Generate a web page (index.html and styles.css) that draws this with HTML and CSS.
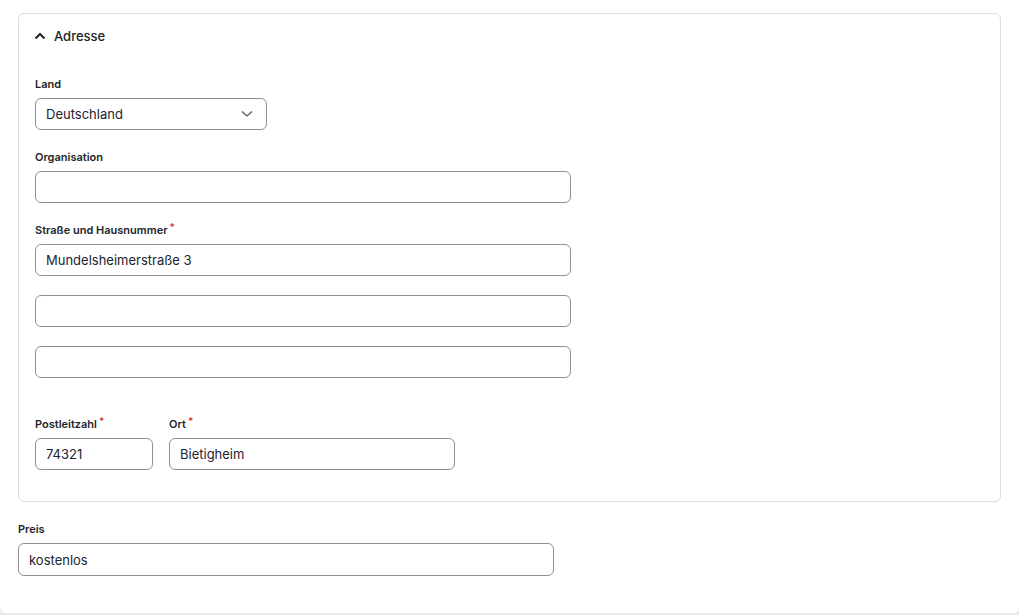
FILE: index.html
```html
<!DOCTYPE html>
<html lang="de">
<head>
    <meta charset="utf-8">
    <meta name="viewport" content="width=device-width, initial-scale=1.0">
    <title>Adresse</title>
    <link rel="stylesheet" href="styles.css">
</head>
<body>
    <div class="page">
        <details class="fieldset" open>
            <summary class="fieldset-title">
                <svg class="chevron" width="12" height="8" viewBox="0 0 12 8">
                    <polyline points="1.5,6.5 6,2 10.5,6.5" fill="none" stroke="#232429" stroke-width="2"/>
                </svg>
                Adresse
            </summary>
            <div class="fieldset-body">
                <div class="field">
                    <label class="label">Land</label>
                    <div class="select">
                        <span>Deutschland</span>
                        <svg width="12" height="8" viewBox="0 0 12 8">
                            <polyline points="1,1.5 6,6 11,1.5" fill="none" stroke="#545560" stroke-width="1.3"/>
                        </svg>
                    </div>
                </div>
                <div class="field">
                    <label class="label">Organisation</label>
                    <input class="input wide" type="text" value="">
                </div>
                <div class="field">
                    <label class="label required">Straße und Hausnummer</label>
                    <input class="input wide" type="text" value="Mundelsheimerstraße 3">
                </div>
                <div class="field">
                    <input class="input wide" type="text" value="">
                </div>
                <div class="field">
                    <input class="input wide" type="text" value="">
                </div>
                <div class="field-row">
                    <div class="field">
                        <label class="label required">Postleitzahl</label>
                        <input class="input zip" type="text" value="74321">
                    </div>
                    <div class="field">
                        <label class="label required">Ort</label>
                        <input class="input city" type="text" value="Bietigheim">
                    </div>
                </div>
            </div>
        </details>
        <div class="field price">
            <label class="label">Preis</label>
            <input class="input wide" type="text" value="kostenlos">
        </div>
    </div>
</body>
</html>
```

FILE: styles.css
```css
* {
    margin: 0;
    padding: 0;
    box-sizing: border-box;
}

body {
    font-family: Inter, 'Noto Sans', sans-serif;
    background-color: #e8e9ed;
    color: #222330;
    height: 615px;
    overflow: hidden;
}

.page {
    background-color: #ffffff;
    height: 613px;
    border-radius: 0 0 6px 6px;
    padding: 13px 18px 0 18px;
}

.fieldset {
    width: 983px;
    border: 1px solid #dcdde2;
    border-radius: 6px;
}

.fieldset-title {
    list-style: none;
    display: flex;
    align-items: center;
    gap: 8px;
    padding: 12px 15px 13px 14px;
    font-size: 13px;
    line-height: 20px;
    font-weight: 500;
    color: #232429;
}

.fieldset-title::-webkit-details-marker {
    display: none;
}

.chevron {
    margin-left: 1px;
}

.fieldset-body {
    padding: 17px 16px 31px 16px;
}

.field {
    display: flex;
    flex-direction: column;
    margin-bottom: 19px;
}

.label {
    font-size: 11px;
    line-height: 16px;
    font-weight: 600;
    color: #232429;
    margin-bottom: 6px;
}

.required::after {
    content: '*';
    color: #d93a3a;
    font-size: 10px;
    margin-left: 2px;
    position: relative;
    top: -3px;
}

.input,
.select {
    height: 32px;
    border: 1px solid #8e919b;
    border-radius: 6px;
    padding: 0 10px;
    font-family: Inter, 'Noto Sans', sans-serif;
    font-size: 13px;
    color: #222330;
    background-color: #ffffff;
    outline: none;
}

.select {
    width: 232px;
    display: flex;
    align-items: center;
    justify-content: space-between;
    padding-right: 13px;
}

.wide {
    width: 536px;
}

.field-row {
    display: flex;
    gap: 16px;
    margin-top: 38px;
}

.field-row .field {
    margin-bottom: 0;
}

.zip {
    width: 118px;
}

.city {
    width: 286px;
}

.price {
    margin-top: 19px;
}

.price .input {
    height: 33px;
}
```
